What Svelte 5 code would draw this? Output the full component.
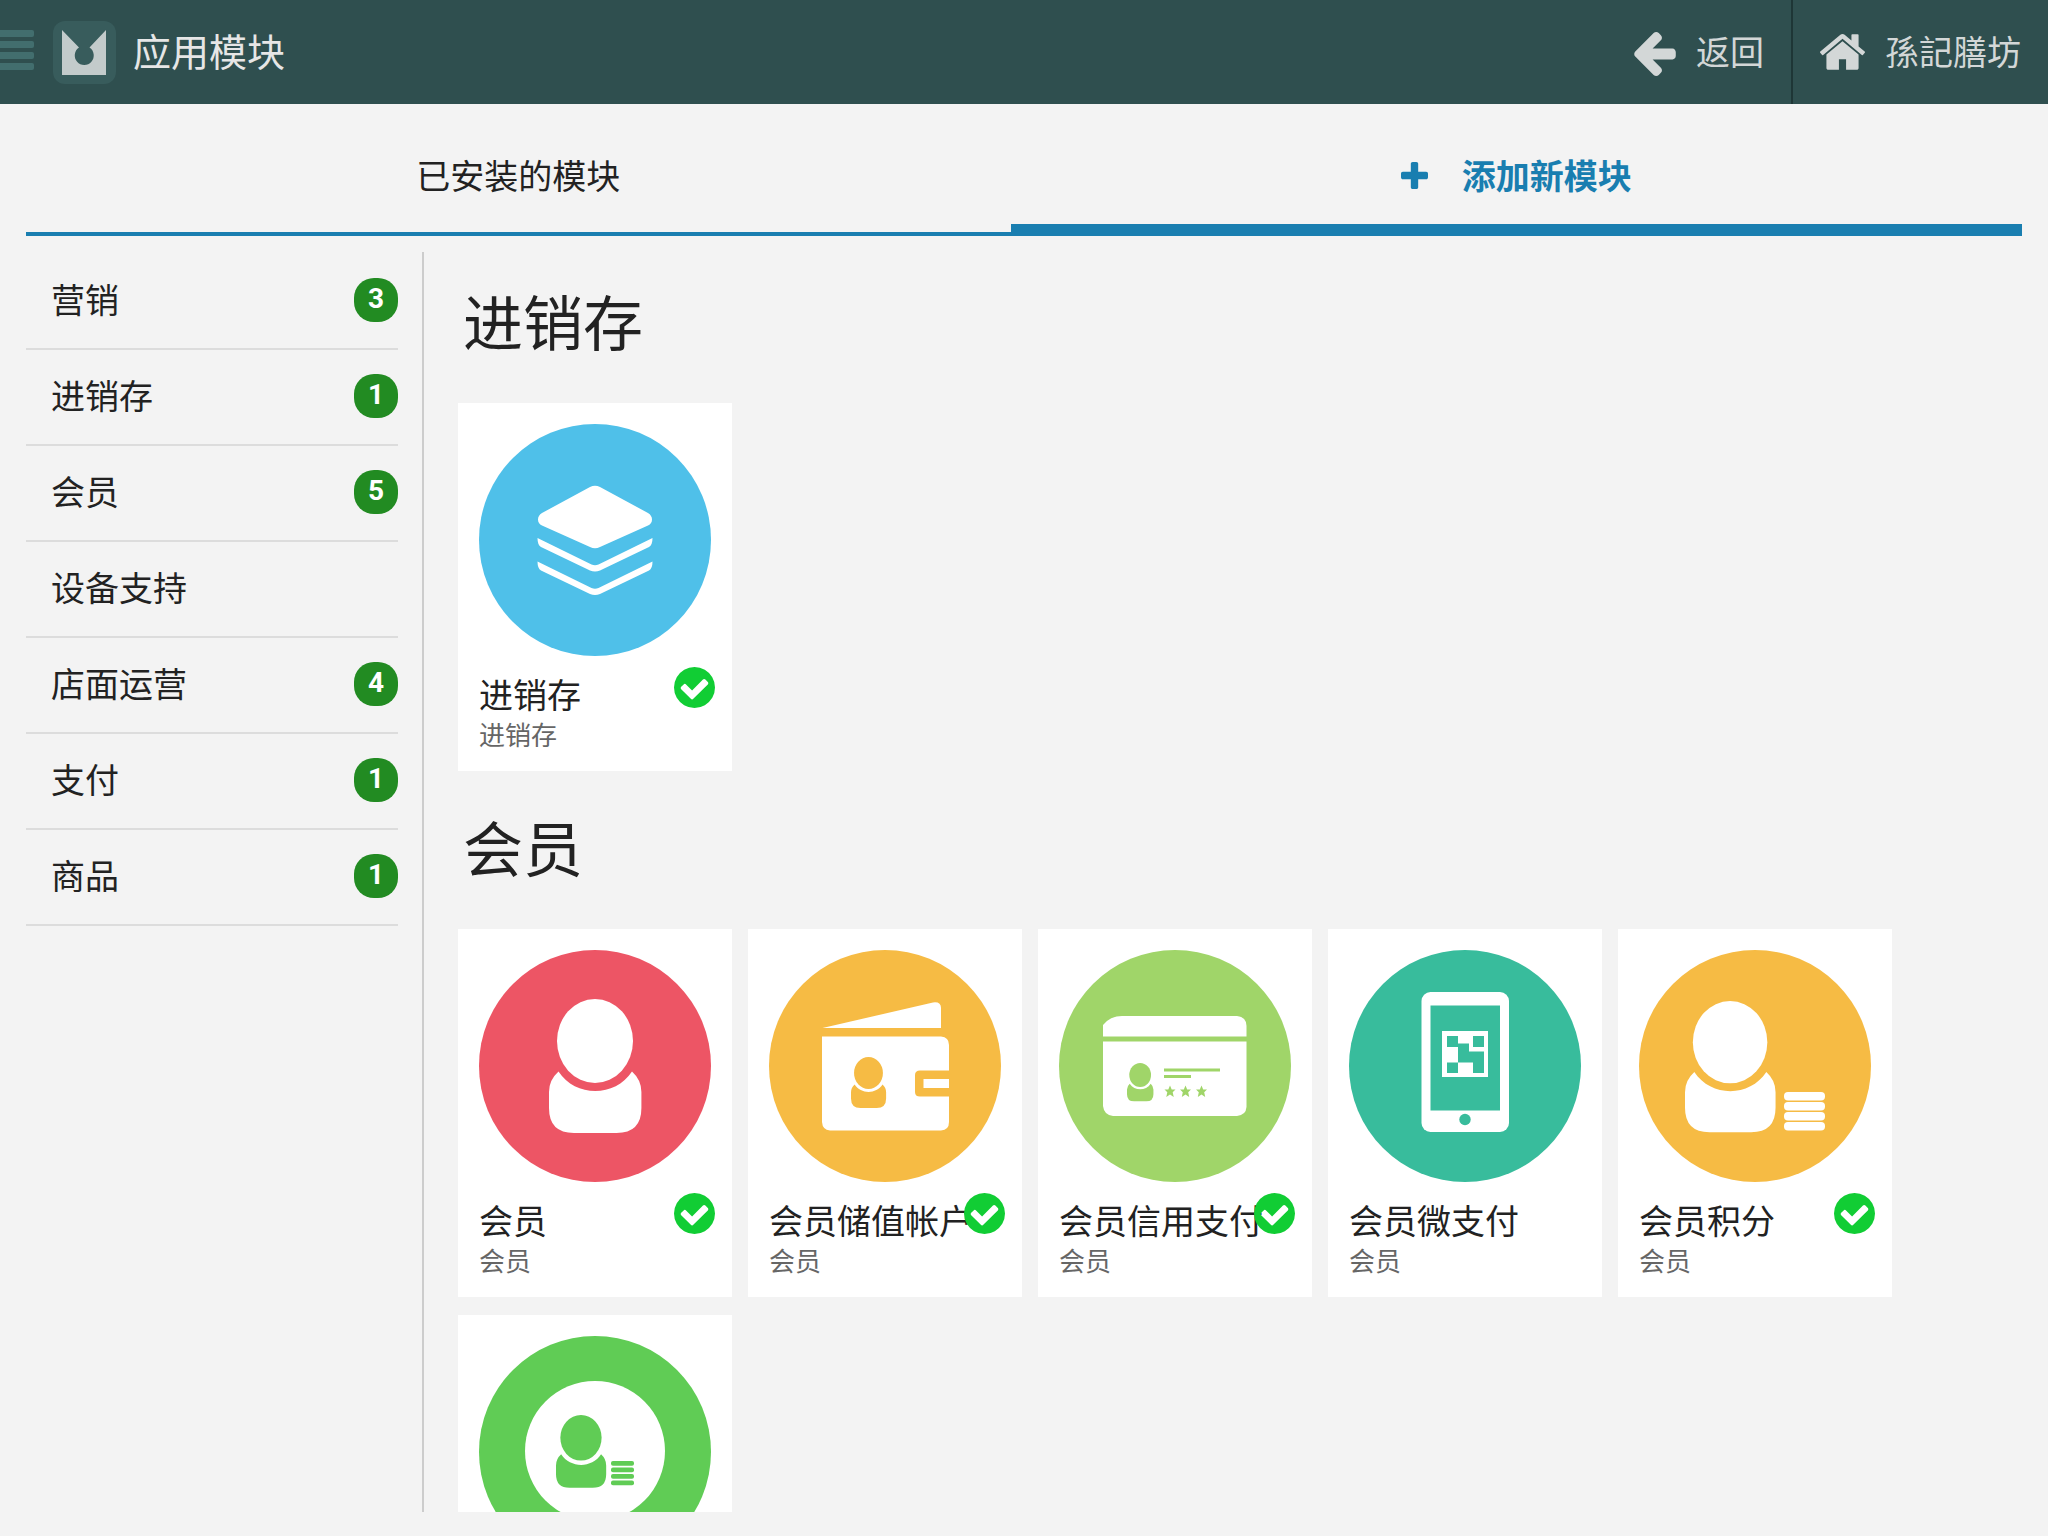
<script>
  const CATEGORIES = [
    { name: '营销', count: 3 },
    { name: '进销存', count: 1 },
    { name: '会员', count: 5 },
    { name: '设备支持', count: 0 },
    { name: '店面运营', count: 4 },
    { name: '支付', count: 1 },
    { name: '商品', count: 1 },
  ]

  const SECTIONS = [
    {
      title: '进销存',
      modules: [{ name: '进销存', icon: 'layers', color: '#4fc0e9', installed: true }],
    },
    {
      title: '会员',
      modules: [
        { name: '会员', icon: 'member', color: '#ed5565', installed: true },
        { name: '会员储值帐户', icon: 'wallet', color: '#f6bb44', installed: true },
        { name: '会员信用支付', icon: 'credit', color: '#a0d569', installed: true },
        { name: '会员微支付', icon: 'phone', color: '#38bc9c', installed: false },
        { name: '会员积分', icon: 'points', color: '#f6bb44', installed: true },
        { name: '', icon: 'exchange', color: '#60cc55', installed: false },
      ],
    },
  ]

  let activeTab = $state('add')
</script>

{#snippet person(x, y, scale, fill)}
  <g transform="translate({x} {y}) scale({scale})" {fill}>
    <ellipse cx="46" cy="42" rx="38" ry="42" />
    <path d="M9.5 72.5Q0 81 0 93V109Q0 134 25 134H67.500Q92.400 134 92.400 109V93Q92.400 81 83 72.500C66 98.500 26.500 98.500 9.500 72.500Z" />
  </g>
{/snippet}

{#snippet coins(x, y, scale, fill)}
  <g transform="translate({x} {y}) scale({scale})" {fill}>
    {#each [0, 10, 20, 30] as top}
      <rect y={top} width="41" height="8.4" rx="4" />
    {/each}
  </g>
{/snippet}

{#snippet moduleIcon(icon, color)}
  <svg class="icon" viewBox="0 0 232 232" aria-hidden="true">
    <circle cx="116" cy="116" r="116" fill={color} />
    {#if icon === 'layers'}
      <g fill="#fff">
        <path d="M111 63Q116 60.500 121 63L169 89Q173 91.500 173 95.500T169 101.500L121 123Q116 125.500 111 123L63 101.500Q59 99.500 59 95.500T63 89Z" />
        <path d="M58.500 114L112.500 140.500Q116 142 119.500 140.500L173.500 114Q173.500 121 170 123L121 146.500Q116 148.500 111 146.500L62 123Q58.500 121 58.500 114Z" />
        <path d="M58.500 137.500L112.500 164Q116 165.500 119.500 164L173.500 137.500Q173.500 144.500 170 146.500L121 170Q116 172 111 170L62 146.500Q58.500 144.500 58.500 137.500Z" />
      </g>
    {:else if icon === 'member'}
      {@render person(70, 49, 1, '#fff')}
    {:else if icon === 'wallet'}
      <path fill="#fff" d="M53.500 78L164 52.500Q172 51.500 172 58V78Z" />
      <path fill="#fff" d="M53 86.500H172Q180 87 180 95V120.500H151Q146 120.500 146 125V142Q146 146.500 151 146.500H180V172Q180 180 172 180.500H61Q53.500 180 53 172Z" />
      <rect x="154.500" y="129" width="25.500" height="9" fill="#fff" />
      {@render person(82, 107, 0.38, color)}
    {:else if icon === 'credit'}
      <path fill="#fff" d="M44 86.500V75Q51 66 63 66H178Q187.500 67 187.500 76V86.500Z" />
      <path fill="#fff" d="M44 91.500H187.500V157Q187 165 178 166H54Q45 165 44 156Z" />
      {@render person(68, 113, 0.286, color)}
      <g fill={color}>
        <rect x="105" y="118.500" width="56" height="3" />
        <rect x="105" y="125" width="27" height="3" />
        {#each [111, 126.5, 142.5] as cx}
          <path transform="translate({cx} 141.500)" d="M0-6L1.700-2H5.500L2.700.700L3.700 5.500L0 3L-3.700 5.500L-2.700.700L-5.500-2H-1.700Z" />
        {/each}
      </g>
    {:else if icon === 'phone'}
      <rect x="72.500" y="42" width="87.500" height="140" rx="9" fill="#fff" />
      <rect x="81.500" y="55.500" width="69.500" height="105" fill={color} />
      <circle cx="116" cy="169.500" r="5.700" fill={color} />
      <rect x="93" y="81" width="46" height="46" fill="#fff" />
      <path fill={color} d="M98 86h11v7.500h11v8h15v21.500h-11v-10.500h-15v-15.500h-11zM124 86h11v11h-11zM98 112.500h11v10.500h-11z" />
    {:else if icon === 'points'}
      {@render person(46, 51, 0.98, '#fff')}
      {@render coins(145, 142, 1, '#fff')}
    {:else}
      <circle cx="116" cy="115" r="70" fill="#fff" />
      {@render person(77, 79, 0.543, color)}
      <g fill={color}>
        {#each [125, 131.5, 138, 144.5] as y}
          <rect x="132" {y} width="23" height="4.700" rx="2" />
        {/each}
      </g>
    {/if}
  </svg>
{/snippet}

<div class="app">
  <header>
    <button class="menu" aria-label="菜单">
      <i></i><i></i><i></i><i></i>
    </button>
    <svg class="logo" viewBox="0 0 63 63" aria-hidden="true">
      <rect width="63" height="63" rx="12" fill="#385c5c" />
      <path fill="#c3cbcb" d="M9 9L26 26.500A9.500 9.500 0 1 0 36.500 26.500L53 9V54H9Z" />
    </svg>
    <h1>应用模块</h1>
    <nav>
      <a href="#back">
        <svg class="arrow" viewBox="192 39 1472 1700" aria-hidden="true">
          <path d="M1664 896v128q0 53-32.500 90.500t-84.500 37.500h-704l293 294q38 36 38 90t-38 90l-75 76q-37 37-90 37-52 0-91-37l-651-652q-37-37-37-90 0-52 37-91l651-650q38-38 91-38 52 0 90 38l75 74q38 38 38 91t-38 91l-293 293h704q52 0 84.500 37.500t32.500 90.500z" />
        </svg>
        <span>返回</span>
      </a>
      <a href="#home">
        <svg class="home" viewBox="90 256 1612 1280" aria-hidden="true">
          <path d="M1472 992v480q0 26-19 45t-45 19h-384v-384h-256v384h-384q-26 0-45-19t-19-45v-480q0-1 .5-3t.5-3l575-474 575 474q1 2 1 6zm223-69l-62 74q-8 9-21 11h-3q-13 0-21-7l-692-577-692 577q-12 8-24 7-13-2-21-11l-62-74q-8-10-7-23.500t11-21.500l719-599q32-26 76-26t76 26l244 204v-195q0-14 9-23t23-9h192q14 0 23 9t9 23v408l219 182q10 8 11 21.500t-7 23.500z" />
        </svg>
        <span lang="zh-Hant">孫記膳坊</span>
      </a>
    </nav>
  </header>

  <div class="tabs">
    <button class:active={activeTab === 'installed'} onclick={() => (activeTab = 'installed')}>
      已安装的模块
    </button>
    <button class:active={activeTab === 'add'} onclick={() => (activeTab = 'add')}>
      <svg class="plus" viewBox="192 128 1408 1408" aria-hidden="true">
        <path d="M1600 736v192q0 40-28 68t-68 28h-416v416q0 40-28 68t-68 28h-192q-40 0-68-28t-28-68v-416h-416q-40 0-68-28t-28-68v-192q0-40 28-68t68-28h416v-416q0-40 28-68t68-28h192q40 0 68 28t28 68v416h416q40 0 68 28t28 68z" />
      </svg>
      添加新模块
    </button>
  </div>

  <main>
    <aside>
      <ul>
        {#each CATEGORIES as c}
          <li>
            <a href="#{c.name}">
              <span>{c.name}</span>
              {#if c.count}
                <span class="badge">{c.count}</span>
              {/if}
            </a>
          </li>
        {/each}
      </ul>
    </aside>

    <div class="content">
      {#each SECTIONS as section}
        <section>
          <h2>{section.title}</h2>
          <div class="cards">
            {#each section.modules as m}
              <button class="card">
                {@render moduleIcon(m.icon, m.color)}
                {#if m.name}
                  <span class="name">{m.name}</span>
                  <span class="group">{section.title}</span>
                {/if}
                {#if m.installed}
                  <svg class="check" viewBox="128 128 1536 1536" aria-hidden="true">
                    <path d="M1412 734q0-28-18-46l-91-90q-19-19-45-19t-45 19l-408 407-226-226q-19-19-45-19t-45 19l-91 90q-18 18-18 46 0 27 18 45l362 362q19 19 45 19 27 0 46-19l543-543q18-18 18-45zm252 162q0 209-103 385.500t-279.500 279.500-385.500 103-385.500-103-279.500-279.500-103-385.500 103-385.500 279.500-279.500 385.500-103 385.500 103 279.500 279.500 103 385.500z" />
                  </svg>
                {/if}
              </button>
            {/each}
          </div>
        </section>
      {/each}
    </div>
  </main>
</div>

<style>
  :global(body) {
    background: #f3f3f3;
  }
  .app {
    display: flex;
    flex-direction: column;
    height: 100vh;
    box-sizing: border-box;
    padding-bottom: 24px;
    font-family: 'Noto Sans CJK SC', sans-serif;
    font-size: 34px;
    color: #222;
  }
  button {
    border: 0;
    background: none;
    font: inherit;
    color: inherit;
    cursor: pointer;
  }
  a {
    color: inherit;
    text-decoration: none;
  }

  header {
    display: flex;
    align-items: center;
    flex: none;
    height: 104px;
    background: #2f4f4f;
    color: #e6e6e6;
  }
  .menu {
    display: grid;
    gap: 4px;
    width: 34px;
    margin-right: 19px;
    padding: 0 0 4px;
  }
  .menu i {
    height: 7px;
    border-radius: 0 2px 2px 0;
    background: #426e6e;
  }
  .logo {
    width: 63px;
    height: 63px;
  }
  h1 {
    flex: 1;
    margin: 0 0 0 17px;
    padding-bottom: 4px;
    font-size: 38px;
    line-height: 48px;
    font-weight: 400;
  }
  nav {
    display: flex;
    align-self: stretch;
    color: #d3d7d7;
  }
  nav a {
    display: flex;
    align-items: center;
    gap: 20px;
    padding: 0 27px;
  }
  nav a + a {
    border-left: 2px solid #1e3636;
  }
  nav span {
    padding-bottom: 2px;
    line-height: 48px;
  }
  nav svg {
    fill: currentColor;
  }
  .arrow {
    width: 42px;
    height: 48px;
  }
  .home {
    width: 45px;
    height: 36px;
  }

  .tabs {
    display: flex;
    flex: none;
    margin: 0 26px;
  }
  .tabs button {
    display: flex;
    flex: auto;
    align-items: center;
    justify-content: center;
    gap: 34px;
    padding: 46px 0 32px;
    border-bottom: 4px solid #197eb0;
    line-height: 50px;
  }
  .tabs .active {
    padding-bottom: 24px;
    border-bottom-width: 12px;
    color: #197eb0;
    font-weight: 700;
  }
  .plus {
    width: 27px;
    height: 27px;
    fill: currentColor;
  }

  main {
    display: flex;
    flex: 1;
    min-height: 0;
    margin: 16px 26px 0;
  }
  aside {
    flex: none;
    width: 372px;
    padding: 2px 24px 0 0;
    border-right: 2px solid #ccc;
  }
  ul {
    list-style: none;
    margin: 0;
    padding: 0;
  }
  li a {
    display: flex;
    justify-content: space-between;
    height: 44px;
    padding: 24px 0 26px 25px;
    border-bottom: 2px solid #dcdcdc;
    line-height: 42px;
  }
  .badge {
    width: 44px;
    height: 44px;
    border-radius: 20px;
    background: #228b22;
    color: #fff;
    font-family: Roboto, sans-serif;
    font-size: 28px;
    font-weight: 700;
    text-align: center;
  }

  .content {
    flex: 1;
    display: flex;
    flex-direction: column;
    gap: 7px;
    padding-left: 34px;
    overflow-y: auto;
    scrollbar-width: none;
  }
  h2 {
    margin: 0;
    padding: 28px 5px 43px;
    font-size: 60px;
    line-height: 80px;
    font-weight: 400;
  }
  .cards {
    display: grid;
    grid-template-columns: repeat(auto-fill, 274px);
    gap: 18px 16px;
  }
  .card {
    position: relative;
    display: flex;
    flex-direction: column;
    padding: 21px 21px 18px;
    background: #fff;
    text-align: left;
  }
  .icon {
    width: 232px;
    height: 232px;
    margin-bottom: 18px;
  }
  .name {
    line-height: 40px;
    white-space: nowrap;
  }
  .group {
    color: #666;
    font-size: 26px;
    line-height: 39px;
  }
  .check {
    position: absolute;
    top: 264px;
    right: 17px;
    width: 41px;
    height: 41px;
    fill: #11cd34;
  }
</style>
